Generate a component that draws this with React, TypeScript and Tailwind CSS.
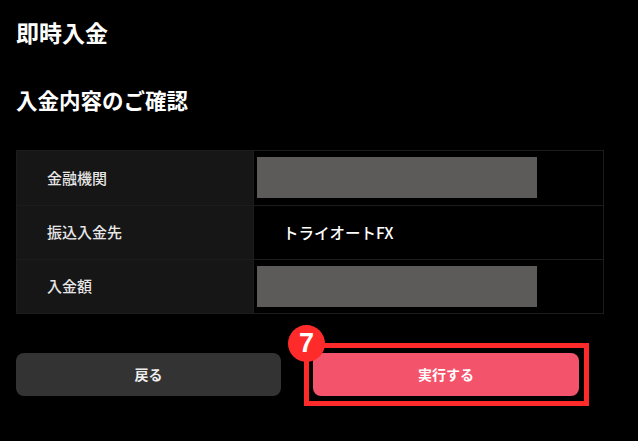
import React from 'react';

const font = { fontFamily: "'Noto Sans CJK JP', 'Noto Sans', sans-serif" };

type Row = { label: string; value?: string };

const rows: Row[] = [
  { label: '金融機関' },
  { label: '振込入金先', value: 'トライオートFX' },
  { label: '入金額' },
];

export default function App() {
  return (
    <div className="w-[638px] h-[441px] bg-black text-white px-4 pt-4 overflow-hidden" style={font}>
      <h1 className="text-[23px] font-bold leading-[32px]">即時入金</h1>
      <h2 className="mt-[38px] text-[21.5px] font-bold leading-[28px]">入金内容のご確認</h2>

      {/* confirmation table */}
      <div className="mt-[36px] w-[588px] border border-[#1c1c1c] flex flex-col">
        {rows.map((row, i) => (
          <div
            key={row.label}
            className={`flex h-[54px] ${i > 0 ? 'border-t border-[#1c1c1c]' : ''}`}
          >
            <div className="w-[236px] bg-[#161616] flex items-center pl-[30px] text-[15px] font-medium text-[#e6e6e6]">
              {row.label}
            </div>
            <div className="flex-1 border-l border-[#1c1c1c] pl-[3px]">
              {row.value ? (
                <div className="h-full flex items-center pl-[26px] text-[15.5px] font-medium text-white">{row.value}</div>
              ) : (
                <div className="mt-[6px] w-[280px] h-[41px] bg-[#5c5b59]" />
              )}
            </div>
          </div>
        ))}
      </div>

      {/* actions */}
      <div className="mt-[39px] flex gap-[32px]">
        <button className="w-[265px] h-[43px] rounded-[8px] bg-[#333333] text-[14px] font-bold text-[#eeeeee]">
          戻る
        </button>
        <div className="relative">
          <button className="w-[266px] h-[43px] rounded-[8px] bg-[#f4546b] text-[14px] font-bold text-white">
            実行する
          </button>
          <div className="absolute -left-[9px] -right-[10px] -top-[10px] -bottom-[10px] border-[5px] border-[#ff2b2b] pointer-events-none" />
          <div className="absolute -left-[25px] -top-[28px] w-[37px] h-[37px] rounded-full bg-[#ff2b2b] flex items-center justify-center text-white text-[27px] font-bold leading-none" style={{ fontFamily: "'Liberation Sans', Arial, sans-serif" }}>
            7
          </div>
        </div>
      </div>
    </div>
  );
}
